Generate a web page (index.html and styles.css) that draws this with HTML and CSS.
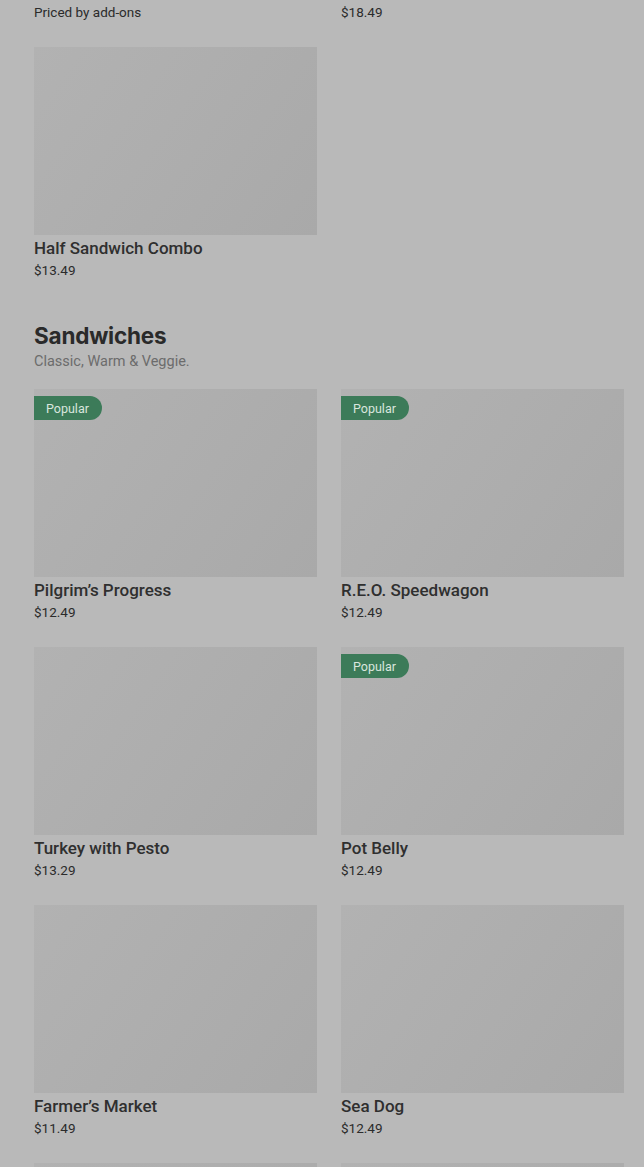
FILE: index.html
```html
<!DOCTYPE html>
<html lang="en">
<head>
<meta charset="utf-8">
<title>Menu</title>
<link rel="stylesheet" href="styles.css">
</head>
<body>
<main class="menu">
  <section class="section first">
    <div class="grid">
      <article class="item">
        <div class="thumb"></div>
        <h3 class="name">Build Your Own Salad</h3>
        <p class="price">Priced by add-ons</p>
      </article>
      <article class="item">
        <div class="thumb"></div>
        <h3 class="name">Party Sandwich Tray</h3>
        <p class="price">$18.49</p>
      </article>
      <article class="item">
        <div class="thumb"></div>
        <h3 class="name">Half Sandwich Combo</h3>
        <p class="price">$13.49</p>
      </article>
    </div>
  </section>

  <section class="section">
    <h2 class="section-title">Sandwiches</h2>
    <p class="section-sub">Classic, Warm &amp; Veggie.</p>
    <div class="grid">
      <article class="item">
        <div class="thumb"><span class="badge">Popular</span></div>
        <h3 class="name">Pilgrim’s Progress</h3>
        <p class="price">$12.49</p>
      </article>
      <article class="item">
        <div class="thumb"><span class="badge">Popular</span></div>
        <h3 class="name">R.E.O. Speedwagon</h3>
        <p class="price">$12.49</p>
      </article>
      <article class="item">
        <div class="thumb"></div>
        <h3 class="name">Turkey with Pesto</h3>
        <p class="price">$13.29</p>
      </article>
      <article class="item">
        <div class="thumb"><span class="badge">Popular</span></div>
        <h3 class="name">Pot Belly</h3>
        <p class="price">$12.49</p>
      </article>
      <article class="item">
        <div class="thumb"></div>
        <h3 class="name">Farmer’s Market</h3>
        <p class="price">$11.49</p>
      </article>
      <article class="item">
        <div class="thumb"></div>
        <h3 class="name">Sea Dog</h3>
        <p class="price">$12.49</p>
      </article>
      <article class="item">
        <div class="thumb"></div>
        <h3 class="name">Hot Italian</h3>
        <p class="price">$12.49</p>
      </article>
      <article class="item">
        <div class="thumb"></div>
        <h3 class="name">Chicken Club</h3>
        <p class="price">$12.49</p>
      </article>
    </div>
  </section>
</main>
</body>
</html>
```

FILE: styles.css
```css
html, body {
  margin: 0;
  padding: 0;
  background: #b9b9b9;
  overflow: hidden;
}

body {
  font-family: Roboto, "Liberation Sans", Arial, sans-serif;
  color: #282828;
}

.menu {
  margin-top: -211px;
  padding: 0 20px 0 34px;
}

.section {
  padding-top: 42px;
}

.section.first {
  padding-top: 0;
}

.section-title {
  margin: 0;
  font-family: Inter, "Noto Sans", sans-serif;
  font-size: 22.5px;
  line-height: 28px;
  font-weight: 700;
  letter-spacing: -0.2px;
  color: #2a2a2a;
}

.section-sub {
  margin: 2px 0 0;
  font-size: 14.5px;
  line-height: 20px;
  color: #6c6c6c;
}

.grid {
  display: grid;
  grid-template-columns: 283px 283px;
  column-gap: 24px;
  row-gap: 25px;
}

.section-sub + .grid {
  margin-top: 17px;
}

.item {
  display: flex;
  flex-direction: column;
}

.thumb {
  position: relative;
  height: 188px;
  background: linear-gradient(125deg, #b2b2b2 0%, #aeaeae 45%, #a9a9a9 100%);
}

.badge {
  position: absolute;
  left: 0;
  top: 7px;
  height: 24px;
  padding: 0 13px 0 12px;
  display: flex;
  align-items: center;
  background: #3c7b59;
  color: #d9e6de;
  font-size: 12.5px;
  border-radius: 0 12px 12px 0;
}

.name {
  margin: 3px 0 0;
  font-size: 17px;
  line-height: 20px;
  font-weight: 500;
  color: #2f2f2f;
}

.price {
  margin: 3px 0 0;
  font-size: 13.5px;
  line-height: 19px;
  color: #2b2b2b;
}
```
